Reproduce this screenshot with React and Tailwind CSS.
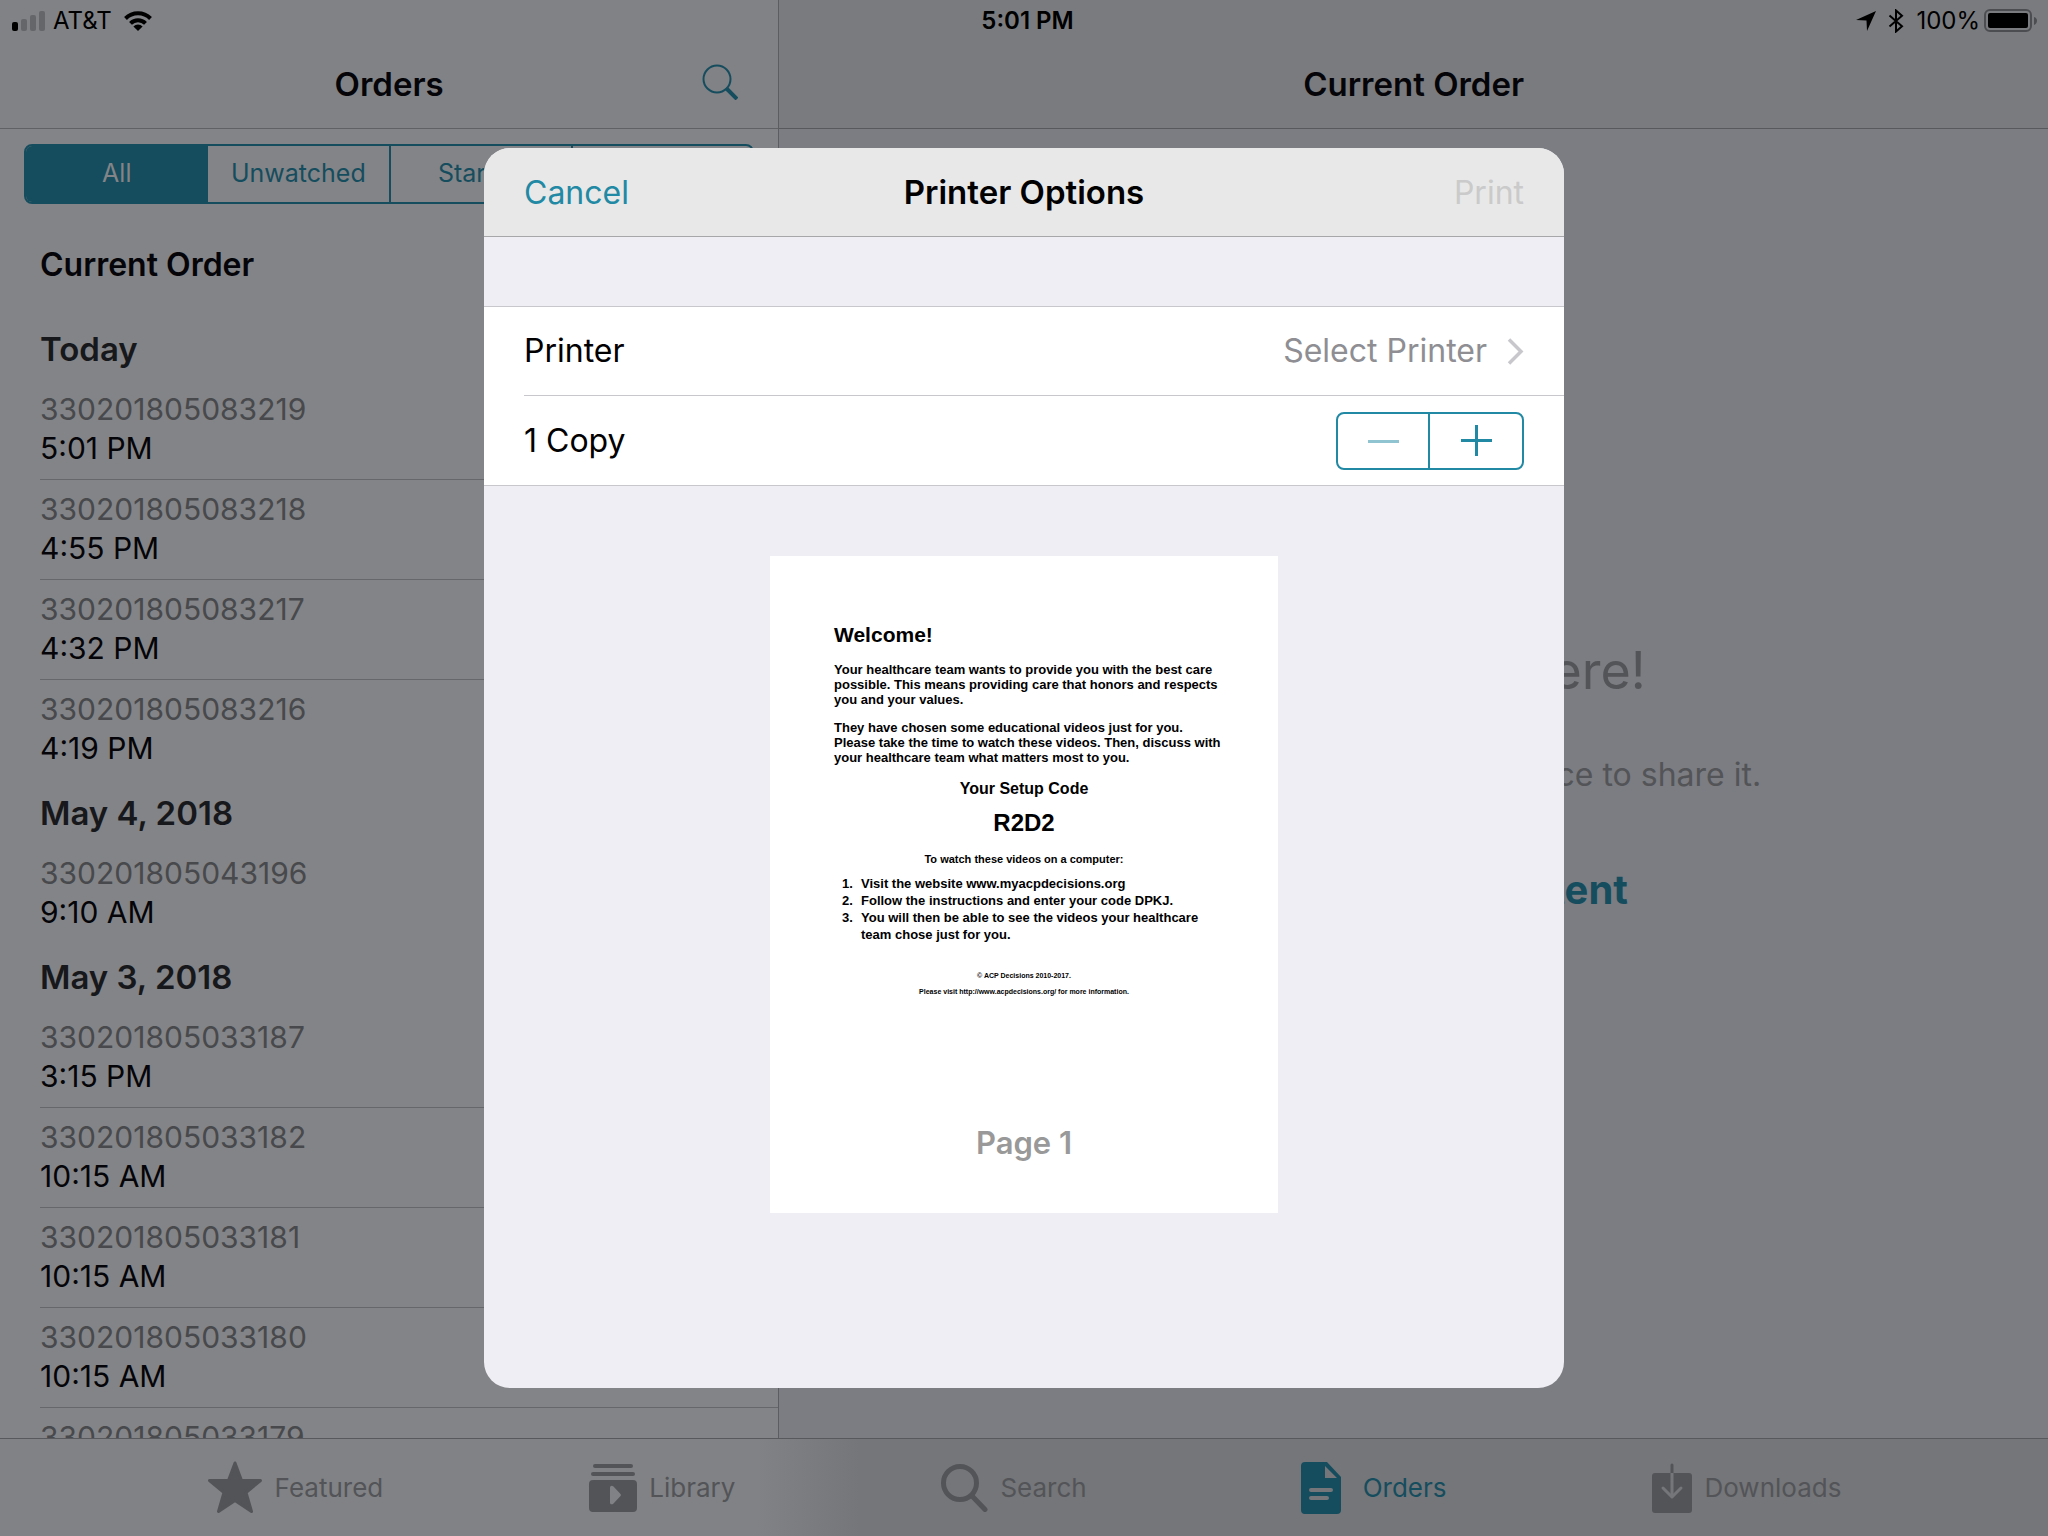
import React from "react";

const groups = [
  { title: "Today", rows: [["330201805083219", "5:01 PM"], ["330201805083218", "4:55 PM"], ["330201805083217", "4:32 PM"], ["330201805083216", "4:19 PM"]] },
  { title: "May 4, 2018", rows: [["330201805043196", "9:10 AM"]] },
  { title: "May 3, 2018", rows: [["330201805033187", "3:15 PM"], ["330201805033182", "10:15 AM"], ["330201805033181", "10:15 AM"], ["330201805033180", "10:15 AM"], ["330201805033179", "10:14 AM"]] },
];

function StatusBar() {
  return (
    <div className="absolute inset-x-0 top-0 z-10 grid h-[42px] grid-cols-3 items-center pl-3 pr-[11px] text-2xl text-black">
      <div className="flex items-center gap-2">
        <svg width="33" height="20" viewBox="0 0 33 20">
          <rect x="0" y="11" width="6" height="9" rx="2" fill="#000" />
          <rect x="9" y="8" width="6" height="12" rx="2" fill="#65666a" />
          <rect x="18" y="4" width="6" height="16" rx="2" fill="#65666a" />
          <rect x="27" y="0" width="6" height="20" rx="2" fill="#65666a" />
        </svg>
        <span>AT&amp;T</span>
        <svg className="ml-1" width="28" height="20" viewBox="0 0 28 20">
          <g fill="none" stroke="#000" strokeWidth="4">
            <path d="M1.500 7.500a17.800 17.800 0 0 1 25 0" />
            <path d="M6.500 12.300a10.600 10.600 0 0 1 15 0" />
          </g>
          <path d="M14 20l-4.600-4.600a6.600 6.600 0 0 1 9.200 0z" />
        </svg>
      </div>
      <div className="pl-1.5 text-center font-semibold">5:01 PM</div>
      <div className="flex items-center justify-end gap-1">
        <svg width="20" height="20" viewBox="0 0 20 20"><path d="M20 0L11 20L10.500 9.500L0 9z" /></svg>
        <svg className="ml-2" width="16" height="24" viewBox="0 0 16 24"><path d="M1.500 6.500L14 17.200L8 22.500V1.500L14 6.800L1.500 17.500" fill="none" stroke="#000" strokeWidth="2" /></svg>
        <span className="ml-2">100%</span>
        <svg width="53" height="24" viewBox="0 0 53 24">
          <rect x="1" y="1" width="46" height="21" rx="5" fill="none" stroke="#4c4d50" strokeWidth="2" />
          <rect x="4" y="4" width="40" height="15" rx="2" />
          <path d="M50 8c4 1 4 6 0 8z" fill="#4c4d50" />
        </svg>
      </div>
    </div>
  );
}

function Sidebar() {
  return (
    <section className="flex w-[calc(38%+1px)] shrink-0 flex-col border-r border-[#5c5d61] bg-[#838487]">
      <header className="grid h-[129px] shrink-0 grid-cols-[1fr_auto_1fr] items-center border-b border-[#606165] bg-[#818285] px-10 pt-[42px]">
        <span />
        <h1 className="text-[33px] font-semibold">Orders</h1>
        <button aria-label="Search orders" className="mb-1.5 justify-self-end">
          <svg width="36" height="36" viewBox="0 0 36 36" fill="none" stroke="#164d5e">
            <circle cx="15" cy="15" r="13.500" strokeWidth="2" />
            <path d="M24.500 24.500L35 35" strokeWidth="4" />
          </svg>
        </button>
      </header>
      <div className="px-6 pt-[15px]">
        <div className="grid h-15 grid-cols-4 overflow-hidden rounded-lg border-2 border-[#164d5e] text-[25px] text-[#164d5e]">
          <button className="bg-[#164d5e] text-[#838487]">All</button>
          <button>Unwatched</button>
          <button className="border-l-2 border-[#164d5e]">Started</button>
          <button className="border-l-2 border-[#164d5e]">Watched</button>
        </div>
      </div>
      <div className="flex min-h-0 flex-1 flex-col overflow-hidden pl-10">
        <h2 className="flex h-28 shrink-0 items-center pt-2.5 text-[32px] font-semibold">Current Order</h2>
        {groups.map((g) => (
          <section key={g.title}>
            <h2 className="flex h-16 items-center pt-1 text-[33px] font-semibold text-[#17181b]">{g.title}</h2>
            <ul className="divide-y divide-[#66676b]">
              {g.rows.map(([id, time]) => (
                <li key={id} className="flex h-25 flex-col justify-center pb-0.5 text-[30px] leading-[39px]">
                  <span className="text-[#48494c]">{id}</span>
                  <span>{time}</span>
                </li>
              ))}
            </ul>
          </section>
        ))}
      </div>
    </section>
  );
}

function Detail() {
  return (
    <section className="flex min-w-0 flex-1 flex-col bg-[#7c7d82]">
      <header className="flex h-[129px] shrink-0 items-center justify-center border-b border-[#58595d] bg-[#7a7b7e] pt-[42px]">
        <h1 className="text-[33px] font-semibold">Current Order</h1>
      </header>
      <div className="flex flex-1 flex-col items-center pt-[502px] text-[#535457]">
        <p className="text-[52px] leading-20">Nothing is on here!</p>
        <p className="mt-6 text-[32px] leading-20">Add some videos and use a device to share it.</p>
        <button className="mt-[35px] text-[40px] font-bold leading-20 text-[#164d5e]">Add Featured Content</button>
      </div>
    </section>
  );
}

const steps = [
  "Visit the website www.myacpdecisions.org",
  "Follow the instructions and enter your code DPKJ.",
  <>You will then be able to see the videos your healthcare<br />team chose just for you.</>,
];

function PageSheet() {
  return (
    <article className="mx-auto mt-[70px] flex h-[657px] w-[508px] flex-col bg-white px-16 pt-[67px] font-['Liberation_Sans',Arial,sans-serif] font-bold">
      <h3 className="text-[21px] leading-6">Welcome!</h3>
      <p className="mt-[15px] whitespace-nowrap text-[13px] leading-[15px]">
        Your healthcare team wants to provide you with the best care<br />possible. This means providing care that honors and respects<br />you and your values.
      </p>
      <p className="mt-[13px] whitespace-nowrap text-[13px] leading-[15px]">
        They have chosen some educational videos just for you.<br />Please take the time to watch these videos. Then, discuss with<br />your healthcare team what matters most to you.
      </p>
      <p className="mt-3 text-center text-base">Your Setup Code</p>
      <p className="mt-1.5 text-center text-2xl">R2D2</p>
      <p className="mt-3 text-center text-[11px] leading-4">To watch these videos on a computer:</p>
      <ol className="ml-2 mt-2 whitespace-nowrap text-[13px] leading-[17px]">
        {steps.map((step, i) => (
          <li key={i} className="flex">
            <span className="w-[19px]">{i + 1}.</span>
            <span>{step}</span>
          </li>
        ))}
      </ol>
      <p className="mt-[25px] text-center text-[7px] leading-4">© ACP Decisions 2010-2017.</p>
      <p className="text-center text-[7px] leading-4">Please visit http://www.acpdecisions.org/ for more information.</p>
      <p className="mb-[50px] mt-auto text-center font-[Inter,sans-serif] text-[31px] font-semibold leading-10 text-[#999]">Page 1</p>
    </article>
  );
}

function PrinterDialog() {
  return (
    <div role="dialog" aria-label="Printer Options" className="flex h-[1240px] w-[1080px] flex-col overflow-hidden rounded-[26px] bg-[#efeef4] text-[32px]">
      <header className="grid h-[89px] shrink-0 grid-cols-[1fr_auto_1fr] items-center border-b border-[#a7a7aa] bg-[#e8e8e8] px-10 pt-0.5">
        <button className="justify-self-start text-[#2189a4]">Cancel</button>
        <h2 className="text-[33px] font-semibold">Printer Options</h2>
        <button disabled className="justify-self-end text-[#cacaca]">Print</button>
      </header>
      <div className="mt-[69px] border-y border-[#c8c7cc] bg-white pl-10">
        <button className="flex h-22 w-full items-center pr-10">
          <span>Printer</span>
          <span className="ml-auto text-[#8e8e93]">Select Printer</span>
          <svg className="ml-5" width="17" height="27" viewBox="0 0 17 27" fill="none" stroke="#c7c7cc" strokeWidth="3.500"><path d="M2 1.500L14 13.500L2 25.500" /></svg>
        </button>
        <div className="flex h-[90px] items-center justify-between border-t border-[#c8c7cc] pr-10">
          <span>1 Copy</span>
          <div className="grid h-[58px] w-[188px] grid-cols-2 divide-x-2 divide-[#2189a4] rounded-lg border-2 border-[#2189a4]">
            <button disabled aria-label="Fewer copies" className="grid place-items-center"><svg width="31" height="31"><path d="M0 16.500H31" stroke="#90c4d1" strokeWidth="3" /></svg></button>
            <button aria-label="More copies" className="grid place-items-center"><svg width="31" height="31"><path d="M0 15.500H31M15.500 0V31" stroke="#2189a4" strokeWidth="3" /></svg></button>
          </div>
        </div>
      </div>
      <PageSheet />
    </div>
  );
}

const icons = {
  Featured: <svg width="56" height="53" viewBox="0 0 56 53" fill="currentColor" stroke="currentColor" strokeWidth="3" strokeLinejoin="round"><path d="M28 2L34.500 19.500H53.500L39 31.500L44.500 50.500L28 39.500L11.500 50.500L17 31.500L2.500 19.500H21.500z" /></svg>,
  Library: <svg width="48" height="48" viewBox="0 0 48 48" fill="currentColor"><rect x="4" width="40" height="4" rx="2" /><rect x="2" y="8" width="44" height="4" rx="2" /><path fillRule="evenodd" d="M4 16h40a4 4 0 0 1 4 4v24a4 4 0 0 1-4 4H4a4 4 0 0 1-4-4V20a4 4 0 0 1 4-4zM21 24v14.500c0 2 2 2.500 3.500 1l7-7.500q1-1 0-2l-7-7.500c-1.500-1.500-3.500-1-3.500 1.500z" /></svg>,
  Search: <svg width="47" height="48" viewBox="0 0 47 48" fill="none" stroke="currentColor" strokeLinecap="round"><circle cx="19" cy="19" r="16.500" strokeWidth="5" /><path d="M31.500 32.500L44 45.500" strokeWidth="5" /></svg>,
  Orders: <svg width="58" height="52" viewBox="-8 0 58 52" fill="currentColor"><path fillRule="evenodd" d="M4 0H26L40 15V48a4 4 0 0 1-4 4H4a4 4 0 0 1-4-4V4a4 4 0 0 1 4-4zM24 4V16H36zM10 26a2 2 0 0 0 0 4H30a2 2 0 0 0 0-4zM10 34a2 2 0 0 0 0 4H26a2 2 0 0 0 0-4z" /></svg>,
  Downloads: <svg width="40" height="50" viewBox="0 0 40 50" fill="none" strokeLinecap="round" strokeLinejoin="round"><path d="M20 2V14" stroke="currentColor" strokeWidth="3" /><rect y="10" width="40" height="40" rx="3" fill="currentColor" /><path d="M18.500 10h3v22h-3z" fill="#757679" /><path d="M11 25L20 34L29 25" stroke="#757679" strokeWidth="3" /></svg>,
};

function TabBar() {
  return (
    <nav className="flex h-[98px] shrink-0 justify-center gap-[206px] border-t border-[#58595d] bg-linear-to-r from-[#818285] from-37% to-[#757679] to-42% text-[26px] text-[#535458]">
      {Object.keys(icons).map((name) => (
        <button key={name} className={name === "Orders" ? "flex items-center gap-3 text-[#164d5e]" : "flex items-center gap-3"}>
          {icons[name]}
          <span>{name}</span>
        </button>
      ))}
    </nav>
  );
}

export default function App() {
  return (
    <div className="relative flex h-screen flex-col overflow-hidden bg-[#7c7d82] font-[Inter,sans-serif] text-[#050509]">
      <StatusBar />
      <main className="flex min-h-0 flex-1">
        <Sidebar />
        <Detail />
      </main>
      <TabBar />
      <div className="absolute inset-0 z-20 flex items-center justify-center text-black">
        <PrinterDialog />
      </div>
    </div>
  );
}
